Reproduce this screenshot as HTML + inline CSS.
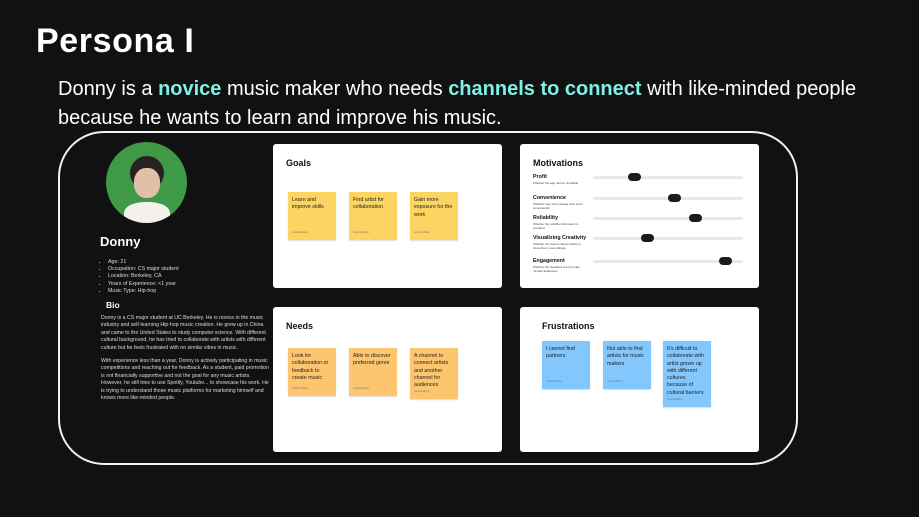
<!DOCTYPE html>
<html><head><meta charset="utf-8"><style>
*{margin:0;padding:0;box-sizing:border-box}
body{width:919px;height:517px;background:#111111;font-family:"Liberation Sans",sans-serif;position:relative;overflow:hidden;color:#fff}
.abs{position:absolute}
h1{position:absolute;left:36px;top:22px;font-size:34px;font-weight:bold;color:#fff;letter-spacing:0.6px}
.sub{position:absolute;left:58px;top:75px;font-size:20px;line-height:29px;color:#fff;white-space:nowrap}
.sub b{color:#7ff0e6}
.frame{position:absolute;left:58px;top:131px;width:740px;height:334px;border:2px solid #f2f2f2;border-radius:46px}
.card{position:absolute;background:#fff;border-radius:3px}
.card h3{position:absolute;font-size:9px;font-weight:bold;color:#111}
.st{position:absolute;width:48px;font-size:5.3px;line-height:7.3px;color:#222;padding:5px 4px;box-shadow:0 1px 1px rgba(0,0,0,.15)}
.st i{position:absolute;left:4px;bottom:4px;font-size:2.5px;color:#777;font-style:normal}
.y{background:#fcd462}.o{background:#fdc56e}.b{background:#82c7fd}
.ml{position:absolute;left:13px;font-size:5.3px;font-weight:bold;color:#111}
.ml span{display:block;font-size:3px;font-weight:normal;color:#444;line-height:4px;margin-top:1px;width:50px}
.tr{position:absolute;left:73px;width:150px;height:3px;background:#e8e8e8;border-radius:2px}
.kn{position:absolute;top:-3px;width:13px;height:8px;background:#1c1c1c;border-radius:4px}
.p{position:absolute;left:101px;width:168px;font-size:5.2px;line-height:7.4px;color:#ddd}
ul li{margin-left:0}
</style></head><body>
<h1>Persona I</h1>
<div class="sub">Donny is a <b>novice</b> music maker who needs <b>channels to connect</b> with like-minded people<br>because he wants to learn and improve his music.</div>
<div class="frame"></div>

<div class="abs" style="left:106px;top:142px;width:81px;height:81px;border-radius:50%;background:#3f9a48;overflow:hidden">
<div class="abs" style="left:24px;top:14px;width:34px;height:34px;border-radius:50%;background:#2a2222"></div>
<div class="abs" style="left:28px;top:26px;width:26px;height:30px;border-radius:45%;background:#e2c0a8"></div>
<div class="abs" style="left:18px;top:60px;width:46px;height:24px;background:#f4f0ec;border-radius:45% 45% 0 0"></div>
</div>
<div class="abs" style="left:100px;top:234px;font-size:13px;font-weight:bold;color:#fff">Donny</div>
<ul class="abs" style="left:108px;top:259px;font-size:5.3px;line-height:7.2px;color:#ddd;list-style:disc">
<li>Age: 21</li><li>Occupation: CS major student</li><li>Location: Berkeley, CA</li><li>Years of Experience: &lt;1 year</li><li>Music Type: Hip-hop</li></ul>
<div class="abs" style="left:106px;top:300px;font-size:8.5px;font-weight:bold;color:#fff">Bio</div>
<div class="p" style="top:315px">Donny is a CS major student at UC Berkeley. He is novice in the music industry and self-learning Hip-hop music creation. He grew up in China and came to the United States to study computer science. With different cultural background, he has tried to collaborate with artists with different culture but he feels frustrated with no similar vibes in music.</div>
<div class="p" style="top:358px">With experience less than a year, Donny is actively participating in music competitions and reaching out for feedback. As a student, paid promotion is not financially supportive and not the goal for any music artists. However, he still tries to use Spotify, Youtube... to showcase his work. He is trying to understand those music platforms for marketing himself and knows more like-minded people.</div>

<div class="card" style="left:273px;top:144px;width:229px;height:144px">
<h3 style="left:13px;top:14px">Goals</h3>
<div class="st y" style="left:15px;top:48px;height:48px">Learn and improve skills<i>Jessica Wang</i></div>
<div class="st y" style="left:76px;top:48px;height:48px">Find artist for collaboration<i>Jessica Wang</i></div>
<div class="st y" style="left:137px;top:48px;height:48px">Gain more exposure for the work<i>Jessica Wang</i></div>
</div>

<div class="card" style="left:520px;top:144px;width:239px;height:144px">
<h3 style="left:13px;top:14px">Motivations</h3>
<div class="ml" style="top:30px">Profit<span>Whether the app can be profitable</span></div>
<div class="tr" style="top:32px"><div class="kn" style="left:35px"></div></div>
<div class="ml" style="top:51px">Convenience<span>Whether user can manage their work conveniently</span></div>
<div class="tr" style="top:53px"><div class="kn" style="left:75px"></div></div>
<div class="ml" style="top:71px">Reliability<span>Whether the reliable information is provided</span></div>
<div class="tr" style="top:73px"><div class="kn" style="left:96px"></div></div>
<div class="ml" style="top:91px">Visualizing Creativity<span>Whether the feature allows artists to show their music attitude</span></div>
<div class="tr" style="top:93px"><div class="kn" style="left:48px"></div></div>
<div class="ml" style="top:114px">Engagement<span>Whether the feedback are from like-minded audiences</span></div>
<div class="tr" style="top:116px"><div class="kn" style="left:126px"></div></div>
</div>

<div class="card" style="left:273px;top:307px;width:229px;height:145px">
<h3 style="left:13px;top:14px">Needs</h3>
<div class="st o" style="left:15px;top:41px;height:48px">Look for collaboration or feedback to create music<i>Jessica Wang</i></div>
<div class="st o" style="left:76px;top:41px;height:48px">Able to discover preferred genre<i>Jessica Wang</i></div>
<div class="st o" style="left:137px;top:41px;height:51px">A channel to connect artists and another channel for audiences<i>Jessica Wang</i></div>
</div>

<div class="card" style="left:520px;top:307px;width:239px;height:145px">
<h3 style="left:22px;top:14px">Frustrations</h3>
<div class="st b" style="left:22px;top:34px;height:48px">I cannot find partners<i>Jessica Wang</i></div>
<div class="st b" style="left:83px;top:34px;height:48px">Not able to find artists for music makers<i>Jessica Wang</i></div>
<div class="st b" style="left:143px;top:34px;height:66px">It's difficult to collaborate with artist grown up with different cultures because of cultural barriers<i>Jessica Wang</i></div>
</div>
</body></html>
